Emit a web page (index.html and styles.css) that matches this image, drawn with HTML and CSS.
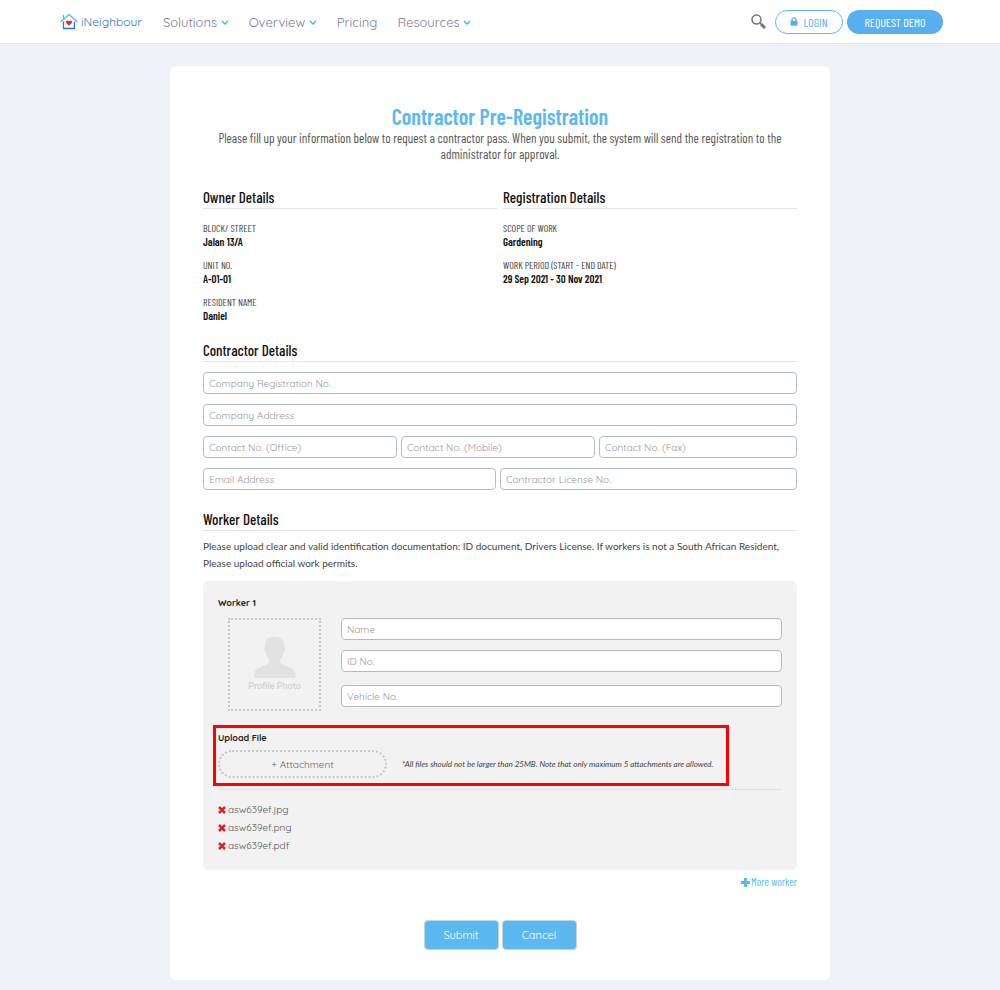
FILE: index.html
```html
<!DOCTYPE html>
<html lang="en">
<head>
    <meta charset="UTF-8">
    <meta name="viewport" content="width=device-width, initial-scale=1.0">
    <title>iNeighbour - Contractor Pre-Registration</title>
    <link rel="stylesheet" href="styles.css">
</head>
<body>
    <header class="site-header">
        <a class="logo" href="#">
            <svg width="18" height="17" viewBox="0 0 18 17" fill="none">
                <path d="M1 8.500 9 1.500l8 7M3.500 4.800V2.500" stroke="#4cbbe6" stroke-width="1.300" stroke-linecap="round" stroke-linejoin="round"/>
                <path d="M3.500 8.500v7h11v-7" stroke="#2f74bd" stroke-width="1.300" stroke-linejoin="round"/>
                <path d="M9 12.800 6.300 10c-1.300-1.500.8-3.600 2.700-1.800 1.900-1.800 4 .3 2.700 1.800z" fill="#e8274b"/>
            </svg>
            <span>iNeighbour</span>
        </a>
        <nav class="main-nav">
            <a href="#">Solutions <svg class="chevron" viewBox="0 0 8 5"><path d="M1 1l3 3 3-3"/></svg></a>
            <a href="#">Overview <svg class="chevron" viewBox="0 0 8 5"><path d="M1 1l3 3 3-3"/></svg></a>
            <a href="#">Pricing</a>
            <a href="#">Resources <svg class="chevron" viewBox="0 0 8 5"><path d="M1 1l3 3 3-3"/></svg></a>
        </nav>
        <div class="header-actions">
            <button class="search" type="button" aria-label="Search">
                <svg width="15" height="15" viewBox="0 0 15 15" fill="none" stroke="#77777b">
                    <circle cx="5.500" cy="5.500" r="4.500" stroke-width="1.500"/>
                    <path d="M8.800 8.800l1.500 1.500" stroke-width="1.500"/>
                    <path d="M10 10l4 4" stroke-width="3"/>
                </svg>
            </button>
            <a class="pill pill-outline" href="#">
                <svg width="8" height="9" viewBox="0 0 8 9"><path d="M2 4V2.800a2 2 0 0 1 4 0V4" fill="none" stroke="#57aff0" stroke-width="1.300"/><rect x="0.500" y="3.800" width="7" height="5" rx="0.800" fill="#57aff0"/></svg>
                LOGIN
            </a>
            <a class="pill pill-solid" href="#">REQUEST DEMO</a>
        </div>
    </header>

    <main class="card">
        <h1>Contractor Pre-Registration</h1>
        <p class="intro">Please fill up your information below to request a contractor pass. When you submit, the system will send the registration to the administrator for approval.</p>

        <!-- Owner and registration summary -->
        <div class="summary">
            <section>
                <h2>Owner Details</h2>
                <dl>
                    <dt>BLOCK/ STREET</dt>
                    <dd>Jalan 13/A</dd>
                    <dt>UNIT NO.</dt>
                    <dd>A-01-01</dd>
                    <dt>RESIDENT NAME</dt>
                    <dd>Daniel</dd>
                </dl>
            </section>
            <section>
                <h2>Registration Details</h2>
                <dl>
                    <dt>SCOPE OF WORK</dt>
                    <dd>Gardening</dd>
                    <dt>WORK PERIOD (START - END DATE)</dt>
                    <dd>29 Sep 2021 - 30 Nov 2021</dd>
                </dl>
            </section>
        </div>

        <form>
            <!-- Contractor Section -->
            <section class="contractor">
                <h2>Contractor Details</h2>
                <input type="text" placeholder="Company Registration No." aria-label="Company Registration No.">
                <input type="text" placeholder="Company Address" aria-label="Company Address">
                <div class="row row-three">
                    <input type="tel" placeholder="Contact No. (Office)" aria-label="Contact No. (Office)">
                    <input type="tel" placeholder="Contact No. (Mobile)" aria-label="Contact No. (Mobile)">
                    <input type="tel" placeholder="Contact No. (Fax)" aria-label="Contact No. (Fax)">
                </div>
                <div class="row row-two">
                    <input type="email" placeholder="Email Address" aria-label="Email Address">
                    <input type="text" placeholder="Contractor License No." aria-label="Contractor License No.">
                </div>
            </section>

            <!-- Worker Section -->
            <section>
                <h2>Worker Details</h2>
                <p class="hint">Please upload clear and valid identification documentation: ID document, Drivers License. If workers is not a South African Resident, Please upload official work permits.</p>
                <div class="worker">
                    <h3>Worker 1</h3>
                    <div class="worker-info">
                        <button class="photo" type="button">
                            <svg width="42" height="42" viewBox="0 0 42 42" fill="#e2e2e2"><path d="M13 3C15 .5 18 .8 21 .8c3 0 5 .4 6.500 2.700 2.500 1.500 3 4.500 2.800 8 1.300.6.800 4-.8 5.500-.5 3-1.500 5-3.500 7v2c2 4 15.500 5 15.500 11.500V42H.5v-4.500C.5 31 13.500 30 15.500 26v-2c-2-2-3-4-3.500-7-1.600-1.500-2.100-4.900-.8-5.500-.2-3.500.3-6.500 1.800-8.500z"/></svg>
                            Profile Photo
                        </button>
                        <div class="worker-fields">
                            <input type="text" placeholder="Name" aria-label="Name">
                            <input type="text" placeholder="ID No." aria-label="ID No.">
                            <input class="vehicle" type="text" placeholder="Vehicle No." aria-label="Vehicle No.">
                        </div>
                    </div>
                    <div class="upload">
                        <h3>Upload File</h3>
                        <div class="upload-row">
                            <button class="attach" type="button">+ Attachment</button>
                            <em>*All files should not be larger than 25MB. Note that only maximum 5 attachments are allowed.</em>
                        </div>
                    </div>
                    <ul class="files">
                        <li><button type="button" aria-label="Remove asw639ef.jpg"><svg viewBox="0 0 8 8"><path d="M1 1l6 6M7 1L1 7"/></svg></button>asw639ef.jpg</li>
                        <li><button type="button" aria-label="Remove asw639ef.png"><svg viewBox="0 0 8 8"><path d="M1 1l6 6M7 1L1 7"/></svg></button>asw639ef.png</li>
                        <li><button type="button" aria-label="Remove asw639ef.pdf"><svg viewBox="0 0 8 8"><path d="M1 1l6 6M7 1L1 7"/></svg></button>asw639ef.pdf</li>
                    </ul>
                </div>
                <a class="more" href="#"><svg width="9" height="9" viewBox="0 0 9 9"><path d="M4.500 0v9M0 4.500h9"/></svg>More worker</a>
            </section>

            <div class="buttons">
                <button type="submit">Submit</button>
                <button type="button">Cancel</button>
            </div>
        </form>
    </main>
</body>
</html>
```

FILE: styles.css
```css
* {
    margin: 0;
    padding: 0;
    box-sizing: border-box;
}

body {
    font-family: Quicksand, Lato, sans-serif;
    font-size: 10px;
    background-color: #eef1f6;
    color: #444;
}

a {
    text-decoration: none;
}

button {
    font-family: inherit;
    cursor: pointer;
}

/* Header */
.site-header {
    display: flex;
    align-items: center;
    height: 44px;
    padding: 0 57px 0 60px;
    background: #fff;
    border-bottom: 1px solid #e4e6ea;
}

.logo {
    display: flex;
    align-items: center;
    gap: 3px;
    font-size: 12px;
    color: #3274b5;
}

.main-nav {
    display: flex;
    gap: 20px;
    margin-left: 21px;
    font-size: 13px;
}

.main-nav a {
    color: #7f7896;
}

.chevron {
    width: 8px;
    height: 5px;
    margin-bottom: 2px;
    fill: none;
    stroke: #3cb4e8;
    stroke-width: 1.3;
}

.header-actions {
    display: flex;
    align-items: center;
    gap: 4px;
    margin-left: auto;
}

.search {
    height: 15px;
    margin-right: 5px;
    border: none;
    background: none;
}

.pill {
    display: flex;
    align-items: center;
    justify-content: center;
    gap: 5px;
    height: 24px;
    border-radius: 12px;
    font-family: "Barlow Condensed", "Roboto Condensed", Lato, sans-serif;
    font-size: 12px;
}

.pill-outline {
    width: 68px;
    border: 1px solid #62b8ee;
    color: #57aff0;
}

.pill-solid {
    width: 96px;
    background: #57aff0;
    color: #fff;
}

/* Card */
.card {
    width: 66%;
    margin: 22px auto 10px;
    padding: 38px 33px 30px;
    background: #fff;
    border-radius: 6px;
}

h1, h2, .intro, .summary, .more {
    font-family: "Barlow Condensed", "Roboto Condensed", Lato, sans-serif;
}

h1 {
    margin-bottom: 2px;
    font-size: 22px;
    font-weight: 600;
    line-height: 24px;
    text-align: center;
    color: #5bb8f0;
}

.intro {
    padding: 0 14px;
    font-size: 13px;
    line-height: 16px;
    text-align: center;
    color: #555;
}

h2 {
    padding-bottom: 2px;
    font-size: 15px;
    font-weight: 500;
    line-height: 18px;
    color: #111;
    border-bottom: 1px solid #e4e4e4;
}

.summary {
    display: grid;
    grid-template-columns: 1fr 1fr;
    gap: 6px;
    margin-top: 26px;
}

dl {
    margin-top: 12px;
    line-height: 14px;
}

dt {
    font-size: 10px;
}

dd {
    margin-bottom: 9px;
    font-size: 11px;
    font-weight: 600;
    color: #111;
}

/* Form fields */
input {
    width: 100%;
    height: 22px;
    padding: 0 5px;
    border: 1px solid #b3bcc0;
    border-radius: 4px;
    background: #fff;
    font-family: inherit;
    font-size: 10px;
}

input::placeholder {
    color: #999;
}

.contractor {
    display: flex;
    flex-direction: column;
    gap: 10px;
    margin: 9px 0 20px;
}

.row {
    display: grid;
    gap: 4px;
}

.row-three {
    grid-template-columns: 49fr 49fr 50fr;
}

.row-two {
    grid-template-columns: 74fr 75fr;
}

.hint {
    margin: 7px 0 9px;
    font-family: Lato, sans-serif;
    line-height: 17px;
}

/* Worker */
.worker {
    padding: 15px;
    background: #f2f2f2;
    border-radius: 6px;
}

h3 {
    font-size: 9px;
    line-height: 14px;
    color: #222;
}

.worker-info {
    display: flex;
    gap: 20px;
    margin: 8px 0 14px 10px;
}

.photo {
    display: flex;
    flex-direction: column;
    align-items: center;
    justify-content: center;
    gap: 3px;
    width: 93px;
    height: 93px;
    padding-bottom: 3px;
    border: 2px dotted #c8c8c8;
    background: none;
    font-family: Roboto, sans-serif;
    font-size: 9px;
    font-weight: 500;
    color: #d4d4d4;
}

.worker-fields {
    display: flex;
    flex: 1;
    flex-direction: column;
    gap: 10px;
}

.vehicle {
    margin-top: 3px;
}

.upload {
    width: fit-content;
    margin-left: -5px;
    padding: 3px 13px 5px 2px;
    border: 3px solid #f00;
}

.upload-row {
    display: flex;
    align-items: center;
    gap: 15px;
    margin-top: 5px;
}

.attach {
    width: 169px;
    height: 28px;
    border: 2px dotted #c8c8c8;
    border-radius: 14px;
    background: none;
    font-size: 10px;
    color: #666;
}

.upload em {
    font-family: Lato, sans-serif;
    font-size: 8px;
}

.files {
    margin-top: 3px;
    padding: 11px 0 0;
    border-top: 1px solid #e2e2e2;
    list-style: none;
    line-height: 18px;
    color: #555;
}

.files li {
    display: flex;
    align-items: center;
    gap: 2px;
}

.files button {
    display: flex;
    border: none;
    background: none;
}

.files svg {
    width: 8px;
    height: 8px;
    stroke: #d8232a;
    stroke-width: 2.5;
}

.more {
    display: flex;
    align-items: center;
    justify-content: flex-end;
    gap: 1px;
    margin-top: 5px;
    font-size: 11px;
    line-height: 14px;
    color: #5bb8f0;
}

.more svg {
    stroke: #5bb8f0;
    stroke-width: 3;
}

.buttons {
    display: flex;
    justify-content: center;
    gap: 3px;
    margin-top: 31px;
}

.buttons button {
    width: 75px;
    height: 30px;
    border: 1px solid #c3d3dc;
    border-radius: 4px;
    background: #5bb8f0;
    font-size: 11px;
    color: #fff;
}
```
